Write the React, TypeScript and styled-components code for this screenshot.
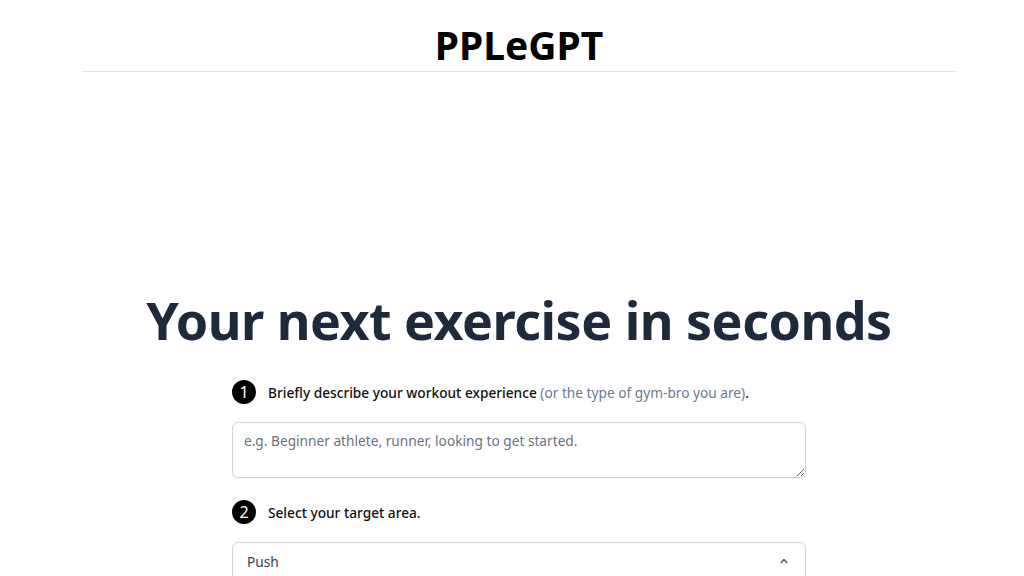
import styled, { createGlobalStyle } from "styled-components";

const Global = createGlobalStyle`
  html, body {
    margin: 0;
    padding: 0;
    background: #ffffff;
    font-family: "Noto Sans", "Open Sans", sans-serif;
  }
  * { box-sizing: border-box; }
`;

const Page = styled.div`
  display: flex;
  flex-direction: column;
  align-items: center;
  min-height: 576px;
  padding-left: 14px;
`;

const Header = styled.header`
  width: 874px;
  display: flex;
  justify-content: center;
  padding: 23px 0 4px;
  border-bottom: 1px solid #e5e7eb;
`;

const Brand = styled.h1`
  margin: 0;
  font-size: 39px;
  line-height: 44px;
  font-weight: 700;
  color: #000;
`;

const Main = styled.main`
  display: flex;
  flex-direction: column;
  align-items: center;
  padding-top: 216px;
`;

const Headline = styled.h2`
  margin: 0;
  font-size: 52px;
  line-height: 64px;
  font-weight: 700;
  color: #1e293b;
  letter-spacing: -0.01em;
`;

const Form = styled.div`
  width: 574px;
  display: flex;
  flex-direction: column;
  margin-top: 28px;
`;

const Step = styled.div<{ $top?: number }>`
  display: flex;
  align-items: center;
  gap: 12px;
  margin-top: ${(p) => p.$top ?? 0}px;
`;

const Badge = styled.span`
  width: 24px;
  height: 24px;
  border-radius: 50%;
  background: #000;
  color: #fff;
  display: flex;
  align-items: center;
  justify-content: center;
  font-size: 16px;
  font-weight: 400;
  flex-shrink: 0;
`;

const Label = styled.p`
  margin: 0;
  font-size: 13.7px;
  font-weight: 500;
  color: #111;
`;

const Hint = styled.span`
  color: #6b7a90;
  font-weight: 400;
`;

const TextArea = styled.textarea`
  display: block;
  width: 100%;
  height: 56px;
  margin-top: 18px;
  padding: 8px 11px;
  border: 1px solid #d1d5db;
  border-radius: 6px;
  font-family: inherit;
  font-size: 13.7px;
  line-height: 20px;
  color: #111;
  box-shadow: 0 1px 2px rgba(0, 0, 0, 0.05);
  &::placeholder { color: #6b7280; }
  &:focus { outline: none; }
`;

const SelectBox = styled.button`
  width: 100%;
  height: 38px;
  margin-top: 18px;
  display: flex;
  align-items: center;
  justify-content: space-between;
  padding: 0 14px 0 14px;
  border: 1px solid #d1d5db;
  border-radius: 6px;
  background: #fff;
  font-family: inherit;
  font-size: 13.7px;
  color: #374151;
  box-shadow: 0 1px 2px rgba(0, 0, 0, 0.05);
  cursor: pointer;
`;

export default function App() {
  return (
    <Page>
      <Global />
      <Header>
        <Brand>PPLeGPT</Brand>
      </Header>
      <Main>
        <Headline>Your next exercise in seconds</Headline>
        <Form>
          <Step>
            <Badge>1</Badge>
            <Label>
              Briefly describe your workout experience{" "}
              <Hint>(or the type of gym-bro you are)</Hint>.
            </Label>
          </Step>
          <TextArea placeholder="e.g. Beginner athlete, runner, looking to get started." />
          <Step $top={22}>
            <Badge>2</Badge>
            <Label>Select your target area.</Label>
          </Step>
          <SelectBox>
            <span>Push</span>
            <svg width="14" height="14" viewBox="0 0 20 20" fill="none" stroke="#4b5563" strokeWidth="2" strokeLinecap="round" strokeLinejoin="round">
              <path d="M6 12l4-4 4 4" />
            </svg>
          </SelectBox>
        </Form>
      </Main>
    </Page>
  );
}
